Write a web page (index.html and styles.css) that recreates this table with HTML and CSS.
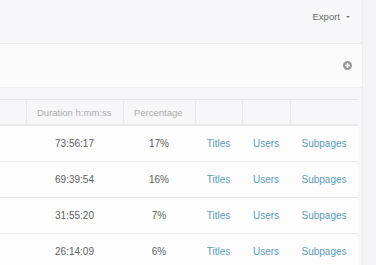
FILE: index.html
```html
<!DOCTYPE html>
<html>
<head>
<meta charset="utf-8">
<link rel="stylesheet" href="styles.css">
</head>
<body>
<div class="main">
  <div class="topbar">
    <span class="export">Export <span class="caret"></span></span>
  </div>
  <div class="panel">
    <svg class="plus" width="9" height="9" viewBox="0 0 9 9"><circle cx="4.5" cy="4.5" r="4.5" fill="#9a9a9c"/><path d="M4.5 2v5M2 4.5h5" stroke="#fff" stroke-width="1.4"/></svg>
  </div>
  <div class="band"></div>
  <div class="table">
    <div class="head">
      <div class="hc"></div>
      <div class="hc">Duration h:mm:ss</div>
      <div class="hc">Percentage</div>
      <div class="hc"></div>
      <div class="hc"></div>
      <div class="hc"></div>
    </div>
    <div class="row">
      <div></div><div class="num">73:56:17</div><div class="num">17%</div>
      <div class="link">Titles</div><div class="link">Users</div><div class="link">Subpages</div>
    </div>
    <div class="row">
      <div></div><div class="num">69:39:54</div><div class="num">16%</div>
      <div class="link">Titles</div><div class="link">Users</div><div class="link">Subpages</div>
    </div>
    <div class="row">
      <div></div><div class="num">31:55:20</div><div class="num">7%</div>
      <div class="link">Titles</div><div class="link">Users</div><div class="link">Subpages</div>
    </div>
    <div class="row">
      <div></div><div class="num">26:14:09</div><div class="num">6%</div>
      <div class="link">Titles</div><div class="link">Users</div><div class="link">Subpages</div>
    </div>
  </div>
</div>
</body>
</html>
```
FILE: styles.css
```css
html, body {
  margin: 0;
  padding: 0;
  background: #f5f5f7;
  font-family: "Liberation Sans", Arial, sans-serif;
  font-size: 9.5px;
  height: 265px;
  overflow: hidden;
}
.main {
  width: 362px;
  border-right: 1px solid #eeeef0;
  min-height: 265px;
  background: #f7f7f9;
}
.topbar {
  height: 43px;
  display: flex;
  justify-content: flex-end;
  align-items: flex-start;
  padding-right: 12px;
  box-sizing: border-box;
}
.export {
  margin-top: 11px;
  color: #6a6a6e;
  font-size: 9.5px;
  display: flex;
  align-items: center;
  gap: 6px;
}
.caret {
  width: 0;
  height: 0;
  border-left: 2.5px solid transparent;
  border-right: 2.5px solid transparent;
  border-top: 2.5px solid #777;
}
.panel {
  height: 44px;
  border-top: 1px solid #e9e9ec;
  background: #fafafb;
  display: flex;
  justify-content: flex-end;
  align-items: center;
  padding-right: 10px;
  box-sizing: border-box;
}
.plus { display: block; }
.band {
  height: 12px;
  border-top: 1px solid #efeff1;
  box-sizing: border-box;
}
.table {
  width: 358px;
  border-top: 1px solid #e5e5e8;
}
.head, .row {
  display: grid;
  grid-template-columns: 26px 97px 72px 47px 48px 68px;
}
.head {
  height: 24px;
  border-bottom: 1px solid #ebebee;
}
.hc {
  border-left: 1px solid #e9e9ec;
  color: #ababae;
  padding-left: 10px;
  display: flex;
  align-items: center;
  white-space: nowrap;
}
.hc:first-child { border-left: none; }
.row {
  height: 36px;
  background: #fdfdfd;
  border-top: 1px solid #e9e9ec;
  box-sizing: border-box;
  font-size: 10px;
}
.row > div {
  display: flex;
  align-items: center;
  justify-content: center;
}
.num { color: #5e5e62; }
.link { color: #5b9cba; }
```
